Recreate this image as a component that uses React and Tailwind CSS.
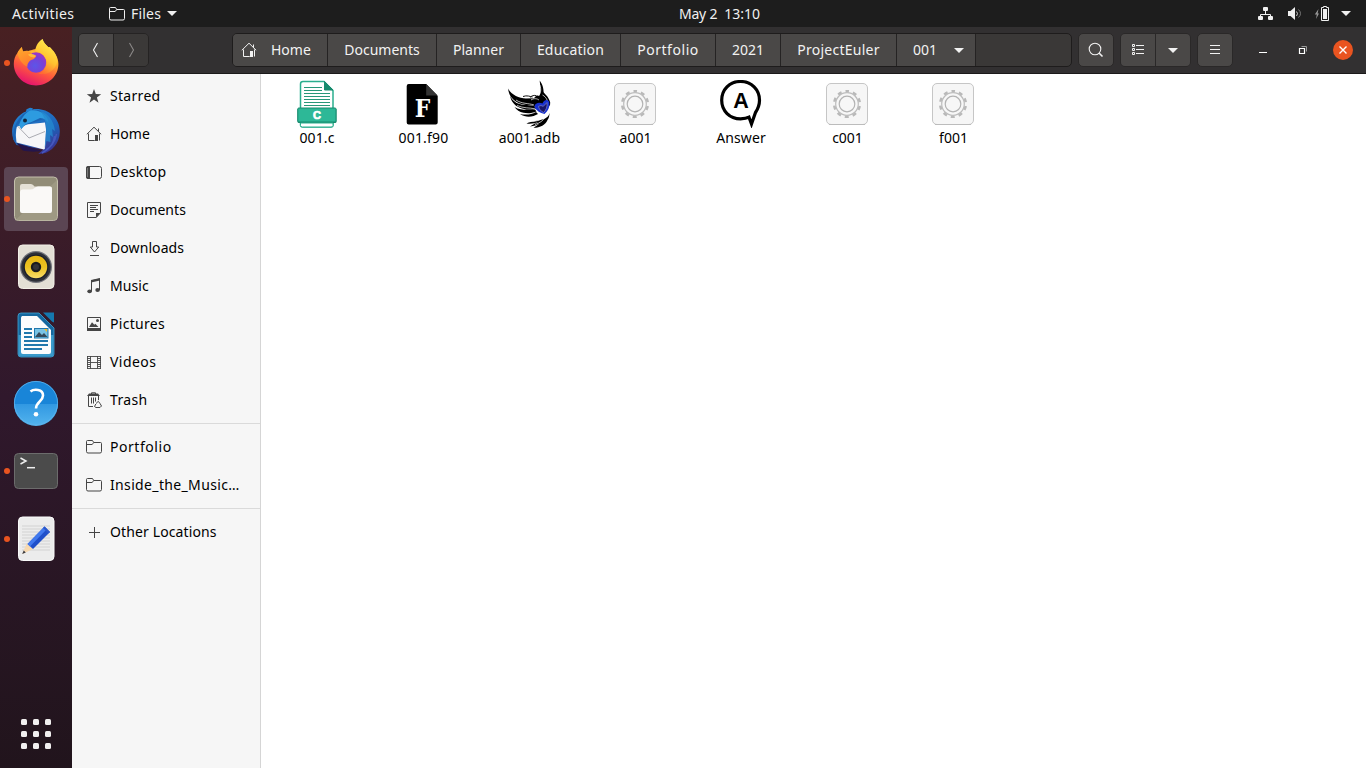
import React from 'react';

const Svg = ({ s = 16, children, className = '' }) => (
  <svg width={s} height={s} viewBox={`0 0 ${s} ${s}`} fill="none" className={`block shrink-0 ${className}`}>
    {children}
  </svg>
);

const Home = () => (
  <Svg>
    <path d="M.8 8.3 8 1.2l7.2 7.1M12.5 2.5v3M2.5 7.5v7h6.2M13.5 7.5v7" stroke="currentColor" />
    <path d="M9 9h3v6H9z" fill="currentColor" />
  </Svg>
);
const Folder = () => (
  <Svg>
    <path d="M.5 12.5v-10q0-1 1-1h5l1.2 2h6.8q1 0 1 1v8q0 1.5-1.5 1.5H2Q.5 14 .5 12.5zM.5 5.5h5.7l1.5-2" stroke="currentColor" />
  </Svg>
);
const Star = () => (
  <Svg>
    <path d="m8 1 1.8 5.1 5.4.1-4.3 3.3 1.6 5.2L8 11.6l-4.5 3.1 1.6-5.2L.8 6.2l5.4-.1z" fill="currentColor" />
  </Svg>
);
const Desktop = () => (
  <Svg>
    <rect x=".5" y="2.5" width="15" height="12" rx="2" stroke="currentColor" />
    <path d="M2 2h2v13H2Q0 15 0 13V4q0-2 2-2z" fill="currentColor" />
    <path d="M1.5 4v9" stroke="#777" />
  </Svg>
);
const Documents = () => (
  <Svg>
    <path d="M1.5.5h13v10.2l-4.2 4.8H1.5z" stroke="currentColor" />
    <path d="M10 15.500V11h4.500z" fill="currentColor" />
    <path d="M4 3.500h8M4 5.500h6M4 7.500h8M4 9.500h4" stroke="currentColor" />
  </Svg>
);
const Downloads = () => (
  <Svg>
    <path d="M6.500 1.500h4V7h2.200L8.500 12 4.300 7h2.200zM4 15.500h9" stroke="currentColor" />
  </Svg>
);
const Music = () => (
  <Svg>
    <path d="M5.500 13.5V2.8l8-1.8v11" stroke="currentColor" />
    <path d="m5 2 9-2v2.6L5 4.4z" fill="currentColor" />
    <ellipse cx="3.600" cy="13.300" rx="2.300" ry="1.900" fill="currentColor" />
    <ellipse cx="11.600" cy="12" rx="2.300" ry="1.900" fill="currentColor" />
  </Svg>
);
const Pictures = () => (
  <Svg>
    <path d="M1.500 1.500h13v13h-13z" stroke="currentColor" />
    <path d="M1 12h14v3H1zM3 11l3-4.800 2.300 2.600 1-1L12.500 11z" fill="currentColor" />
    <circle cx="11.500" cy="4.500" r="1.500" fill="currentColor" />
  </Svg>
);
const Videos = () => (
  <Svg>
    <path d="M1.500 2v13M14.500 2v13M4.500 2v13M11.500 2v13M4.500 8.500h7M1 2.500h14M1 14.500h14M1 4.500h3.500M1 6.500h3.500M1 8.500h3.500M1 10.500h3.500M1 12.500h3.500M11.500 4.500H15M11.500 6.500H15M11.500 8.500H15M11.500 10.500H15M11.500 12.500H15" stroke="currentColor" strokeWidth=".9" />
  </Svg>
);
const Trash = () => (
  <Svg>
    <path d="M5.500 2V.800h4V2M2.500 4v10.500H7M12.500 4v4M5.500 5.500v6M7.500 5.500v6M9.500 5.500v4" stroke="currentColor" />
    <path d="M3 1.500h9l2 2.500H1z" fill="currentColor" />
    <path d="m10 11.500 2.300-2.200 1.700 2.200M9.800 12l-1.300 2.500 1.500 1h4l1.500-1.500-1.500-2.500" stroke="currentColor" />
  </Svg>
);
const Plus = () => (
  <Svg>
    <path d="M8.500 3v11M3 8.500h11" stroke="currentColor" />
  </Svg>
);
const Caret = () => (
  <svg width="10" height="5" viewBox="0 0 10 5" className="block shrink-0">
    <path d="M0 0h10L5 5z" fill="currentColor" />
  </svg>
);

const Firefox = () => (
  <Svg s={48}>
    <defs>
      <linearGradient id="ff1" x1=".75" y1=".05" x2=".35" y2="1">
        <stop offset="0" stopColor="#fff44f" />
        <stop offset=".35" stopColor="#ffb22c" />
        <stop offset=".65" stopColor="#ff5a3c" />
        <stop offset="1" stopColor="#e5126f" />
      </linearGradient>
      <linearGradient id="ff2" x1=".8" y1="0" x2=".4" y2="1">
        <stop offset="0" stopColor="#fff653" />
        <stop offset=".6" stopColor="#ffc02f" />
        <stop offset="1" stopColor="#ff6b32" />
      </linearGradient>
      <radialGradient id="ff3" cx=".45" cy=".65" r=".7">
        <stop offset="0" stopColor="#5b56e8" />
        <stop offset=".6" stopColor="#7a3fd6" />
        <stop offset="1" stopColor="#a933c0" />
      </radialGradient>
      <linearGradient id="ff4" x1="0" y1="0" x2=".5" y2="1">
        <stop offset="0" stopColor="#ffad2b" />
        <stop offset="1" stopColor="#ff7a2c" />
      </linearGradient>
    </defs>
    <path d="M5.500 14c1-2.500 2.800-4.500 4.500-6 0 1.800.5 3.500 1.300 4.600 2-1 3.500-1 4.800-.7L24 10 30.500 0c.8 3.500 3.300 5.500 5.700 8.300 1.200-.5 1.800-.3 2.200.2 4.800 5 8 10.500 8 16.500C46.400 37 36.400 46.400 24 46.400S1.800 36.600 1.800 25c0-4.500 1.200-8 3.700-11z" fill="url(#ff1)" />
    <circle cx="24" cy="23.500" r="10.300" fill="url(#ff3)" />
    <path d="M15 12.500c3-1 6-1 8.500.1 5.800.2 10.500 4.700 11 10.400 2-8-3-12-10-13.500z" fill="#ff9130" opacity=".5" />
    <path d="M30.500 0c-5 3.200-7.500 8.500-7 12.600 5.800.2 10.500 4.700 11 10.400.3 5.500-3 10-8 11.500 8.500 2.500 16.500-3 18.500-11 .8-5-1.800-9-4-11.500l.2 3C39 8.500 32.500 6.500 30.500 0z" fill="url(#ff2)" />
    <path d="M5.500 14c1-2.500 2.800-4.500 4.500-6 0 1.800.5 3.500 1.300 4.600 3-1.300 5.400-.6 7.400.9 1 2 3 2.700 5.500 3-.5 3.500-4 4-6.200 5.200-1.500 2-3 3-2.600 6.300-5.400-3-8.800-8-9.900-14z" fill="url(#ff4)" />
    <path d="M24 17c-2.500-2.500-5-2.700-8-1.500 1 2 3.500 3 6 3z" fill="#ffda45" opacity=".6" />
  </Svg>
);
const Thunderbird = () => (
  <Svg s={48}>
    <defs>
      <linearGradient id="tb1" x1=".2" y1="0" x2=".7" y2="1">
        <stop offset="0" stopColor="#2385d4" />
        <stop offset=".6" stopColor="#1e62b8" />
        <stop offset="1" stopColor="#3b3192" />
      </linearGradient>
    </defs>
    <path d="M14.500 2.300 18 .7l3 .5-1 1.300C34 0 47.500 9.500 47.800 24c.3 12-8 20.500-17 22.600l-4.500.4 5-4.500L4.500 38C1.500 33.500 0 29.500.1 24.500 0 16 6 7.500 14 4.500z" fill="url(#tb1)" />
    <path d="M4.500 20 9 18l24-2.500 1 7-1 19-1 1L4.500 35.500 3.800 28z" fill="#f6f6f8" />
    <path d="m6 19.500 11 11.500 16-6.500" stroke="#aaabb2" strokeWidth="1" />
    <path d="M4.500 36 30 43.800C24 45.500 15 44.500 10.800 43.500z" fill="#24154b" />
    <path d="M1 32C.8 19 7 7 18 3.500c8-2.500 14 1 17 7.500-6 2-12.500 4-17 5.500-4 1-7 2.500-8.500 5.500l-3.200-5C3.500 20 3 27 3.500 36z" fill="#1b63b3" />
    <path d="M18 3.500C13 6 9 12 7 18l2.500 4c2.500-4.500 6-6 10-7L28 11c4 .5 7 2 8.500 5 0-8-9-14-18.500-12.500z" fill="#2d9be0" />
    <path d="M28 4c8 2 14 10 15 20l-3-2 1 8-3-2 .5 7-4-1-2 8 1.500-16c1-8-1-16-6-22z" fill="#268bd0" opacity=".75" />
    <path d="M34 43c5-3 8-8 8.500-14M30 46c8-4 13-10 14.500-19" stroke="#4658bd" strokeWidth="1.500" />
    <circle cx="13" cy="13.500" r="2" fill="#12263d" />
  </Svg>
);
const Files = () => (
  <Svg s={48}>
    <rect x="2.500" y="2" width="43" height="43.500" rx="4" fill="#928d78" stroke="#c4bfac" />
    <path d="M3 45.500 45 5v37q0 3.500-3 3.500z" fill="#a49f89" opacity=".65" />
    <path d="M8 19v-8q0-2 2-2h9q2 0 3.500 2.500H38q2 0 2 2V20z" fill="#e4e0d5" />
    <path d="M8 17.500q0-3 3-3h7q3 0 4.500-1.500 1.500-1.500 3.500-1.500h12q2 0 2 2.500v22q0 2-2 2H10q-2 0-2-2z" fill="#faf9f7" />
  </Svg>
);
const Rhythmbox = () => (
  <Svg s={48}>
    <defs>
      <linearGradient id="rb" x1="0" y1="0" x2="0" y2="1">
        <stop stopColor="#e8b715" />
        <stop offset=".5" stopColor="#ecc221" />
        <stop offset="1" stopColor="#f8dc68" />
      </linearGradient>
    </defs>
    <rect x="6.500" y="2" width="35.500" height="43.500" rx="4" fill="#e3dfd5" stroke="#f3f0e8" />
    <circle cx="24" cy="24" r="16" fill="#74757c" />
    <circle cx="24" cy="24" r="14.800" fill="#2d3038" />
    <circle cx="24" cy="24" r="12.500" fill="#1a1d29" />
    <circle cx="24" cy="24" r="11.200" fill="url(#rb)" />
    <circle cx="24" cy="24" r="5.200" fill="#1b1b1e" />
    <circle cx="24" cy="24" r="3" fill="#343438" />
  </Svg>
);
const Writer = () => (
  <Svg s={48}>
    <path d="M9 2h18l15 15v26q0 3-3 3H9q-3 0-3-3V5q0-3 3-3z" fill="#15689f" stroke="#43a4d2" strokeWidth=".8" />
    <path d="M6.500 24h35v19q0 2.500-2.500 2.500H9q-2.500 0-2.500-2.500z" fill="#3a9aca" />
    <path d="M10 5h15l14 14v22q0 2-2 2H11q-2 0-2-2V7q0-1 1-2z" fill="#fbfcfd" />
    <path d="M31 1.500h11v10q-2-.5-3-2z" fill="#1578ae" />
    <path d="M12 18h8M12 22h8M12 26h8M12 30h24M12 34h24M12 38h18" stroke="#2178ad" strokeWidth="1.800" />
    <rect x="22.500" y="17.500" width="13.500" height="9.500" fill="#79c3e5" stroke="#2178ad" />
    <path d="m23 26 4-5 3 3 2-2 3.500 4z" fill="#34495a" />
    <path d="M32 18h3v3z" fill="#f3ba24" />
  </Svg>
);
const Help = () => (
  <Svg s={48}>
    <defs>
      <linearGradient id="hp" x1="0" y1="0" x2="0" y2="1">
        <stop stopColor="#3198e2" />
        <stop offset="1" stopColor="#53b4ee" />
      </linearGradient>
    </defs>
    <circle cx="24" cy="24" r="22" fill="#1985d8" />
    <path d="M2 25a22 22 0 0 0 44 0z" fill="url(#hp)" />
    <circle cx="24" cy="24" r="21.600" stroke="#5fb5ed" strokeWidth=".8" />
    <path d="M18.500 12.500c3-2.500 12.700-3 12.500 4 0 6-7 6-7 13" stroke="#fff" strokeWidth="2.600" />
    <circle cx="24" cy="35.300" r="2.300" fill="#fff" />
  </Svg>
);
const Terminal = () => (
  <Svg s={48}>
    <rect x="2.500" y="6.500" width="43" height="35" rx="4" fill="#4b4b4b" stroke="#6c6c6c" />
    <path d="m8.500 11 5.500 3-5.500 3" stroke="#eee" strokeWidth="1.500" />
    <path d="M15 20.700h8" stroke="#eee" strokeWidth="1.500" />
  </Svg>
);
const Editor = () => (
  <Svg s={48}>
    <rect x="6.500" y="2" width="35.500" height="43.500" rx="4" fill="#ececec" stroke="#fafafa" />
    <path d="M10 11h28M10 14h28M10 17h28M10 20h28M10 23h28M10 26h28M10 29h28M10 32h28M10 35h28" stroke="#d2d2d2" />
    <path d="m10.200 39 4.500-10.500 6.300 5.500z" fill="#f7d9b0" />
    <path d="m10.200 39 1.500-3.500 2.100 2z" fill="#3c3c42" />
    <path d="m15.500 29 17-17.500 5.500 5.500-17 17z" fill="#1f4fca" />
    <path d="m15.500 29 17-17.500 2.500 2.500-17 17.500z" fill="#4179ee" />
    <path d="m31 13 1.500-1.500 5.500 5.500-1.500 1.500z" fill="#2c58cb" />
  </Svg>
);

const CFile = () => (
  <Svg s={48}>
    <path d="M7.500 4q0-2.500 2.500-2.500h21l9 9V45q0 2-2 2H10q-2.500 0-2.500-2z" fill="#fff" stroke="#2bae8e" strokeWidth="1.500" />
    <path d="M31.500 1.500v8.500h8.500z" fill="#168a6d" stroke="#168a6d" />
    <path d="M11 7.500h18M11 10.500h18M11 13.500h26M11 16.500h26M11 19.500h26M11 22.500h26M11 25.500h26" stroke="#279779" strokeWidth="1.200" />
    <path d="M4.500 29h39v12.500q0 1.500-1.500 1.500H6q-1.500 0-1.500-1.500z" fill="#168a6d" />
    <rect x="4.800" y="28" width="38.200" height="14" rx="1" fill="#2db897" stroke="#198a6e" />
    <path d="M7.500 43h32.500v2.500q0 1.500-2 1.500H9.500q-2 0-2-1.500z" fill="#fff" stroke="#2bae8e" />
    <text x="24" y="38.700" textAnchor="middle" fontFamily="Liberation Sans" fontWeight="700" fontSize="11" fill="#fff" stroke="#fff" strokeWidth=".7">C</text>
  </Svg>
);
const FFile = () => (
  <Svg s={48}>
    <path d="M9.700 4h17.500l11.500 12v26.500q0 2-2 2h-27q-2 0-2-2V6q0-2 2-2z" fill="#000" />
    <path d="M27.200 4v11.500h11.500z" fill="#343434" />
    <text x="23.500" y="36.500" textAnchor="middle" fontFamily="DejaVu Serif" fontWeight="700" fontSize="24" textLength="15.500" lengthAdjust="spacingAndGlyphs" fill="#fff">F</text>
  </Svg>
);
const Bird = () => (
  <Svg s={48}>
    <path d="M3 8.500c4 7 11 9.500 18 10l8-.2c1.500-3 4-3 5.500-2.800C36.500 11 35 5.500 34.700.5 38 5 38.500 9 38.600 12c.6 2 5 4 6.600 10.500l-.2 3-14 2.500-3-2.500-7-.5C11 23.500 4 18 3 8.500z" fill="#000" />
    <path d="M5 15.500c3 7 9 9.500 17 9.500l7 1 2 3c-8 1-12 .5-16-1.300C9 25.500 6 21 5 15.500zM9.500 27c6 3.500 13 3 20.500 2.500l1.500 2c-5 2-9 2-13 1.300-4-.8-7-2.800-9-5.800zM15 34c5 1 11 1 16-2l2 2c-5 3-12 4-18 0zM44.500 33c-1 5-6 6.500-11 7.500-6 1-9 1.500-12 3 5 .7 9-.5 12-1.500-3 1.500-6 2.500-8.500 4.500 4-.3 7-1.500 9.500-3-2 1.500-4 3-6 4.300 7 0 12-3 14-7.800 1.500-2 2-4.500 2-7z" fill="#000" />
    <path d="M25 17.300c2-1.500 4-2.500 6.500-1.500M18 16.500c4-1.500 7 0 9.500.5" stroke="#111" strokeWidth="1" />
    <path d="M11 20c6 4 12 3 18 5M12 25.500c7 3 12 2 18 3.300M37.500 15c2 1 4 3 5 6M26 20c3-2 6-1.500 8 0M34.800 5c1.700 5 1 8-1.500 11M25 41.500c6 0 10-1 14-5M30 44.500c5-1.500 8-4 10-7" stroke="#fff" strokeWidth=".7" />
    <path d="M29.500 26.500c.5-4 5-4.500 8-3 1-3.500 5-5 6.500-2 1.500 5-1 9.500-4.500 12.500-4-1-9-3.500-10-7.500z" fill="#1730cf" />
    <path d="M33.500 26.300q2.500-1.500 4.800 0l3.700-3.800c.7 4-1 8-3.500 10-3-1.500-4.500-3.700-5-6.200z" fill="#171568" stroke="#8387cf" strokeWidth=".7" />
  </Svg>
);
const Gear = () => (
  <Svg s={48}>
    <rect x="3.500" y="3.500" width="41" height="41" rx="4.500" fill="#f6f6f6" stroke="#c6c6c6" />
    <path d="M6 44.500h36" stroke="#bcbcbc" />
    <circle cx="24" cy="24" r="12.800" stroke="#b9b9b9" strokeWidth="2.600" strokeDasharray="4 4.040" strokeDashoffset="2" transform="rotate(-90 24 24)" />
    <circle cx="24" cy="24" r="11.300" fill="#f7f7f7" stroke="#bdbdbd" strokeWidth="1.200" />
    <circle cx="24" cy="24" r="7.800" stroke="#b3b3b3" strokeWidth="1.200" />
  </Svg>
);
const AnswerIcon = () => (
  <Svg s={48}>
    <path d="M23.500 1.500C12.500 1.500 4.700 9.700 4.700 20.300s8 18.500 18.800 18.500c3.500 0 6.500-.5 8.500-1.600l2.500 6.800 4-11.500c2-3 4-7.500 4-12.200 0-10.600-8-18.800-19-18.800z" stroke="#000" strokeWidth="3.200" />
    <text x="24" y="27.500" textAnchor="middle" fontFamily="Liberation Sans" fontWeight="700" fontSize="21.500" fill="#000">A</text>
  </Svg>
);

const dock = [
  [Firefox, true],
  [Thunderbird, false],
  [Files, true, true],
  [Rhythmbox, false],
  [Writer, false],
  [Help, false],
  [Terminal, true],
  [Editor, true],
];
const places = [
  [Star, 'Starred', 'tracking-[0.3px]'],
  [Home, 'Home', ''],
  [Desktop, 'Desktop', 'tracking-[0.3px]'],
  [Documents, 'Documents', 'tracking-[0.05px]'],
  [Downloads, 'Downloads', 'tracking-[0.08px]'],
  [Music, 'Music', 'tracking-[0.1px]'],
  [Pictures, 'Pictures', 'tracking-[0.3px]'],
  [Videos, 'Videos', 'tracking-[0.45px]'],
  [Trash, 'Trash', 'tracking-[0.35px]'],
];
const crumbs = [
  ['Documents', 'w-[109px]'],
  ['Planner', 'w-[84px]'],
  ['Education', 'w-[100px] tracking-[0.2px]'],
  ['Portfolio', 'w-[95px] tracking-[0.55px]'],
  ['2021', 'w-[65px]'],
  ['ProjectEuler', 'w-[116px] tracking-[0.25px]'],
];
const files = [
  [CFile, '001.c', 'tracking-[0.1px]'],
  [FFile, '001.f90', 'pl-px tracking-[0.2px]'],
  [Bird, 'a001.adb', 'pl-px tracking-[0.1px]'],
  [Gear, 'a001', 'pl-px'],
  [AnswerIcon, 'Answer', 'tracking-[0.1px]'],
  [Gear, 'c001', 'pl-px'],
  [Gear, 'f001', 'pl-px'],
];

const Place = ({ icon: Icon, spacing = '', children }) => (
  <div className="flex h-[38px] items-center gap-2 pl-3.5">
    <span className="text-[#454545]"><Icon /></span>
    <span className={`whitespace-nowrap ${spacing}`}>{children}</span>
  </div>
);

const button = 'flex items-center justify-center bg-[#4a4847] text-[#f2f2f2]';

export default function App() {
  return (
    <div className="flex h-[768px] w-[1366px] flex-col overflow-hidden bg-white font-['Noto_Sans',sans-serif] text-[14px] leading-5 text-[#000]">
      <header className="grid h-[27px] shrink-0 grid-cols-3 items-center bg-[#1d1d1d] text-[#f0f0f0]">
        <div className="flex items-center">
          <span className="ml-3 w-[97px] tracking-[0.4px]">Activities</span>
          <Folder />
          <span className="ml-1.5 mr-1.5 w-[30px] whitespace-nowrap tracking-[0.2px]">Files</span>
          <Caret />
        </div>
        <div className="flex justify-center gap-[7px] pl-[73px] whitespace-nowrap">
          <span className="tracking-[-0.2px]">May 2</span><span>13:10</span>
        </div>
        <div className="flex items-center justify-end pr-[15px]">
          <Svg className="mr-[13px]">
            <path d="M8.500 4v5M3.500 12V8.500h10V12" stroke="currentColor" />
            <rect x="6" y="1" width="5" height="4" rx="1" fill="currentColor" />
            <rect x="1" y="10" width="5" height="4" rx="1" fill="currentColor" />
            <rect x="11" y="10" width="5" height="4" rx="1" fill="currentColor" />
          </Svg>
          <Svg className="mr-[12px]">
            <path d="M2 5h2.500L9 1v13l-4.500-4H2z" fill="currentColor" />
            <path d="M10.500 5.500q2 2 0 4.500" stroke="#ccc" />
            <path d="M12.500 3.500q4 4 0 8" stroke="#777" />
          </Svg>
          <Svg className="mr-[11px]">
            <path d="M4.500 3 .8 8.500h2L2 13l3-5.500H3.600z" fill="#999" />
            <path d="M7.500 1.500h2v-1h3v1h2v13h-7z" stroke="currentColor" />
            <path d="M9 3h4v10H9z" fill="currentColor" />
          </Svg>
          <Caret />
        </div>
      </header>

      <div className="flex min-h-0 flex-1">
        <nav className="flex w-[72px] shrink-0 flex-col bg-linear-to-b from-[#482022] via-[#30182c] to-[#21141c] pt-1">
          <div className="flex flex-1 flex-col gap-1">
            {dock.map(([Icon, running, active], i) => (
              <div key={i} className={`relative mx-1 flex h-16 items-center justify-center rounded ${active ? 'bg-[#5b4553]' : ''}`}>
                {running && <span className="absolute top-[29px] left-0 size-1.5 rounded-full bg-[#e95420]" />}
                <Icon />
              </div>
            ))}
          </div>
          <div className="mb-[19px] grid grid-cols-3 gap-1.5 self-center">
            {Array.from({ length: 9 }, (_, i) => (
              <span key={i} className="size-1.5 rounded-[1.5px] bg-[#f1efef]" />
            ))}
          </div>
        </nav>

        <main className="flex min-w-0 flex-1 flex-col">
          <div className="flex h-[47px] shrink-0 items-center border-b border-[#1b1a1a] bg-[#323031] pl-1.5">
            <div className="flex h-[34px] w-[71px] overflow-hidden rounded-[5px] border border-[#252323]">
              <div className={`${button} w-[35px] border-r border-[#252323]`}>
                <Svg><path d="m9.500 1-4 7 4 7" stroke="currentColor" strokeWidth="1.100" /></Svg>
              </div>
              <div className="flex flex-1 items-center justify-center bg-[#3b3938] text-[#8b8988]">
                <Svg><path d="m6.500 1 4 7-4 7" stroke="currentColor" strokeWidth="1.100" /></Svg>
              </div>
            </div>
            <div className="ml-[83px] flex h-[34px] w-[840px] overflow-hidden rounded-[5px] border border-[#1e1c1c] bg-[#3a3837]">
              <div className="flex w-[95px] items-center gap-[14px] border-r border-[#252323] bg-[#4a4847] pl-2 text-[#f2f2f2]">
                <Home /><span>Home</span>
              </div>
              {crumbs.map(([name, style]) => (
                <div key={name} className={`${button} ${style} border-r border-[#252323]`}>{name}</div>
              ))}
              <div className="flex w-[79px] items-center gap-[17px] border-r border-[#252323] bg-[#4a4847] pl-4 text-[#f2f2f2]">
                <span>001</span><Caret />
              </div>
            </div>
            <div className={`${button} ml-1.5 h-[34px] w-9 rounded-[5px] border border-[#2a2828]`}>
              <Svg><circle cx="7" cy="7" r="5.800" stroke="currentColor" strokeWidth="1.100" /><path d="m11 11 3.500 3.500" stroke="currentColor" strokeWidth="1.600" /></Svg>
            </div>
            <div className="ml-1.5 flex h-[34px] w-[71px] overflow-hidden rounded-[5px] border border-[#2a2828]">
              <div className={`${button} w-[35px] border-r border-[#2a2828]`}>
                <Svg>
                  <path d="M2.500 2.500h2v2h-2zM2.500 6.500h2v2h-2zM2.500 10.500h2v2h-2zM6 3.500h8M6 7.500h8M6 11.500h8" stroke="currentColor" />
                </Svg>
              </div>
              <div className={`${button} flex-1`}><Caret /></div>
            </div>
            <div className={`${button} ml-1.5 h-[34px] w-9 rounded-[5px] border border-[#2a2828]`}>
              <Svg><path d="M3 3.500h10M3 7.500h10M3 11.500h10" stroke="currentColor" /></Svg>
            </div>
            <div className="ml-[22px] flex items-center text-white">
              <Svg><path d="M4 10.500h8" stroke="currentColor" /></Svg>
              <Svg className="ml-6">
                <path d="M6.500 4.500h5v5" stroke="#999" />
                <path d="M4.500 6.500h5v5h-5z" stroke="currentColor" strokeWidth="1.200" />
              </Svg>
              <Svg s={20} className="ml-[22px]">
                <circle cx="10" cy="10" r="10" fill="#e95420" />
                <path d="m6.500 6.500 7 7m0-7-7 7" stroke="#fff" strokeWidth="1.400" />
              </Svg>
            </div>
          </div>

          <div className="flex min-h-0 flex-1">
            <aside className="w-[189px] shrink-0 border-r border-[#d5d5d5] bg-[#f6f6f6] pt-[3px]">
              {places.map(([Icon, name, spacing]) => <Place key={name} icon={Icon} spacing={spacing}>{name}</Place>)}
              <div className="mt-1 mb-1 h-px bg-[#dadada]" />
              <Place icon={Folder} spacing="tracking-[0.55px]">Portfolio</Place>
              <Place icon={Folder} spacing="tracking-[0.35px]">Inside_the_Music…</Place>
              <div className="mt-1 mb-1 h-px bg-[#dadada]" />
              <Place icon={Plus} spacing="tracking-[0.12px]">Other Locations</Place>
            </aside>
            <section className="flex flex-1 items-start bg-white pt-[6px] pl-[3px]">
              {files.map(([Icon, name, style]) => (
                <div key={name} className="flex w-[106px] shrink-0 flex-col items-center">
                  <Icon />
                  <span className={style}>{name}</span>
                </div>
              ))}
            </section>
          </div>
        </main>
      </div>
    </div>
  );
}
